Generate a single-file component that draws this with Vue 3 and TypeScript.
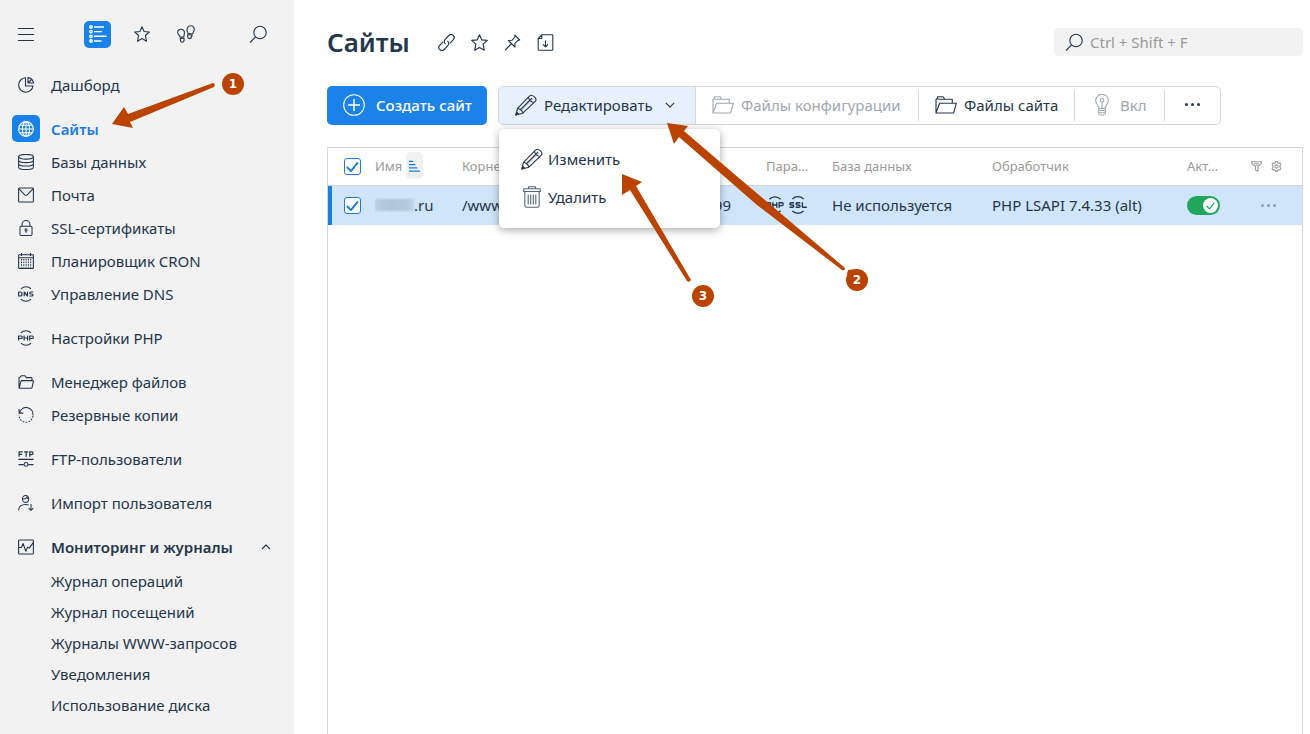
<script setup lang="ts">
import { ref } from 'vue'

interface NavItem {
  label: string
  icon: string
  active?: boolean
}

const groups: NavItem[][] = [
  [{ label: 'Дашборд', icon: 'pie' }],
  [
    { label: 'Сайты', icon: 'globe', active: true },
    { label: 'Базы данных', icon: 'db' },
    { label: 'Почта', icon: 'mail' },
    { label: 'SSL-сертификаты', icon: 'lock' },
    { label: 'Планировщик CRON', icon: 'calendar' },
    { label: 'Управление DNS', icon: 'dns' },
  ],
  [{ label: 'Настройки PHP', icon: 'php' }],
  [
    { label: 'Менеджер файлов', icon: 'folder' },
    { label: 'Резервные копии', icon: 'restore' },
  ],
  [{ label: 'FTP-пользователи', icon: 'ftp' }],
  [{ label: 'Импорт пользователя', icon: 'import' }],
]

const journal: string[] = [
  'Журнал операций',
  'Журнал посещений',
  'Журналы WWW-запросов',
  'Уведомления',
  'Использование диска',
]

const allChecked = ref(true)
const rowChecked = ref(true)
const enabled = ref(true)
const query = ref('')
</script>

<template>
  <svg class="sprite" aria-hidden="true">
    <symbol id="burger" viewBox="0 0 16 16"><path d="M0 2.500h16M0 8.500h16M0 14.500h16" /></symbol>
    <symbol id="list" viewBox="0 0 18 18">
      <g stroke-width="1.400">
        <circle cx="2" cy="2" r="1.200" /><circle cx="2" cy="6.600" r="1.200" /><circle cx="2" cy="11.300" r="1.200" /><circle cx="2" cy="16" r="1.200" />
        <path d="M5 2h10M5 6.600h8M5 11.300h12.500M5 16h7.500" />
      </g>
    </symbol>
    <symbol id="star" viewBox="0 0 16 16"><path d="M8 .7l2.100 4.800 5.200.5-3.900 3.500 1.100 5.700L8 12.600l-4.500 2.600 1.100-5.700L.7 6l5.200-.5z" /></symbol>
    <symbol id="steps" viewBox="0 0 18 18">
      <path d="M.9 8.300C.2 5.800 1.700 4.300 3.900 4.300c2.400 0 3.700 1.600 3.500 3.900-.1 1.500-.5 2-.5 3.500l-3.800.6C2.900 10.500 1.400 10 .9 8.300zM3.200 13.600l3.700-.6c.6 2.200.1 4.200-1.500 4.300-1.500.1-2.200-1.500-2.200-3.700zM10 5.500C9.900 2.700 11.400.8 13.700.8c2.500 0 4 1.900 3.500 4.400-.4 1.800-1.300 2.200-1.600 3.800l-4.700-.8c0-1.200-.8-1.500-.9-2.700zM10.800 9.500l4.300.8c-.5 2.200-1.300 3.600-2.800 3.400-1.500-.2-1.900-1.900-1.500-4.200z" />
    </symbol>
    <symbol id="search" viewBox="0 0 18 18"><circle cx="11" cy="7.500" r="6.200" /><path d="M6.600 11.900L1 17.500" /></symbol>
    <symbol id="pie" viewBox="0 0 16 16"><path d="M7.500.8A7.200 7.200 0 1 0 15 9H7.500zM10 .6V6h5.500A6.500 6.500 0 0 0 10 .6zM10 6l3.500-3.500" /></symbol>
    <symbol id="globe" viewBox="0 0 16 16"><circle cx="8" cy="8" r="7.400" /><ellipse cx="8" cy="8" rx="3.600" ry="7.400" /><path d="M8 .6v14.800M.6 8h14.800M1.700 4.300h12.600M1.700 11.700h12.600" /></symbol>
    <symbol id="db" viewBox="0 0 16 16"><ellipse cx="8" cy="2.800" rx="7.400" ry="2.300" /><path d="M.6 2.800v10.400c0 1.300 3.300 2.300 7.400 2.300s7.400-1 7.400-2.300V2.800M.6 6.300c0 1.300 3.300 2.300 7.400 2.300s7.400-1 7.400-2.300M.6 9.700c0 1.300 3.300 2.300 7.400 2.300s7.400-1 7.400-2.300" /></symbol>
    <symbol id="mail" viewBox="0 0 16 16"><rect x=".6" y="1" width="14.800" height="14" rx=".8" /><path d="M1 1.800l5.800 6q1.200 1 2.400 0l5.800-6" /></symbol>
    <symbol id="lock" viewBox="0 0 16 17"><rect x="1.600" y="6.600" width="12.800" height="9.800" rx="1.200" /><path d="M3.800 6.600V4.800a4.200 4.200 0 0 1 8.400 0v1.800M8 11.600v2" /><circle cx="8" cy="10.500" r="1.100" /></symbol>
    <symbol id="calendar" viewBox="0 0 16 16"><rect x=".6" y="1.800" width="14.800" height="13.600" rx=".6" /><path d="M1 4.700h14M3.500 0v3M12.500 0v3" /><path stroke-width="1" stroke-dasharray="1.600 1" d="M3.500 6v8.500M5.800 6v8.500M8.100 6v8.500M10.400 6v8.500M12.700 6v8.500" /></symbol>
    <symbol id="dns" viewBox="0 0 16 16"><path d="M3 2.900a7 7 0 0 1 10 0M3 13.100a7 7 0 0 0 10 0" /><path stroke-width="1.200" d="M.6 6v4h1.600c2.400 0 2.400-4 0-4zM6.200 10.300V6l3.300 4V5.700M15.200 6h-2.500c-1.200 0-1.200 2 0 2h1.200c1.400 0 1.400 2 0 2h-2.500" /></symbol>
    <symbol id="php" viewBox="0 0 16 16"><path d="M3 2.900a7 7 0 0 1 10 0M3 13.100a7 7 0 0 0 10 0" /><path stroke-width="1.200" d="M.6 10.400V6h2.600c1.500 0 1.500 2.500 0 2.500H.8M6.100 5.600v4.800M9.600 5.600v4.800M6.100 8h3.500M11.700 10.400V6h2.500c1.500 0 1.500 2.500 0 2.500h-2.300" /></symbol>
    <symbol id="ssl" viewBox="0 0 16 16"><path d="M3 2.600a7.300 7.300 0 0 1 10 0M3 13.400a7.300 7.300 0 0 0 10 0" /><path stroke-width="1.200" d="M4.500 6H1.900C.4 6 .4 8 1.900 8h1.200c1.600 0 1.600 2 0 2H.4M10 6H7.400C5.900 6 5.900 8 7.400 8h1.200c1.600 0 1.600 2 0 2H5.900M11.900 5.500V10h4" /></symbol>
    <symbol id="folder" viewBox="0 0 16 14"><path d="M1 12.800V2.800l1.500-.9L3.200.7h3.600l1.600 1.900h4.800q.8 0 .8.800v2.200M1.200 13.200l1.700-6.800q.2-.8 1-.8h10.700q.9 0 .8.800l-1.300 6q-.2.800-1 .8z" /></symbol>
    <symbol id="restore" viewBox="0 0 16 17"><path d="M1.300 5.700A7.200 7.200 0 0 1 15.300 9M.6 2v4.500h4.600" /><path stroke-dasharray="1.800 1.400" d="M15.300 9.500A7.200 7.200 0 0 1 .8 8.500" /></symbol>
    <symbol id="ftp" viewBox="0 0 16 17"><path stroke-width="1.300" d="M.7 6V1h3.800M.7 3.500h3.200M6 1h4.400M8.200 1v5M12 6V1h2.200c1.700 0 1.700 2.800 0 2.800H12" /><path stroke-width="1.300" d="M0 9h16M0 14.500h5.700M10.300 14.500H16" /><circle cx="8" cy="14.300" r="2" /></symbol>
    <symbol id="import" viewBox="0 0 17 17"><ellipse cx="8" cy="4.300" rx="3.300" ry="3.700" /><path d="M4.900 4.200c2.500.2 3.900-.5 4.500-2 .2 1 .8 1.800 1.800 2M.7 16.600c0-4.500 3-6.600 7.300-6.600 1.400 0 2.400.2 3.300.6M13.800 9.500v6.800M11.300 14l2.500 2.400 2.500-2.400" /></symbol>
    <symbol id="monitor" viewBox="0 0 16 16"><rect x=".6" y="1" width="14.800" height="14" rx=".8" /><path d="M.6 8.500h2.800l1.700-4 2.700 7.700 1.800-4.100 1.700 1 3.900-5.500" /></symbol>
    <symbol id="up" viewBox="0 0 10 6"><path d="M1 5l4-4 4 4" /></symbol>
    <symbol id="down" viewBox="0 0 10 6"><path d="M.8.8L5 5.200 9.200.8" /></symbol>
    <symbol id="link" viewBox="0 0 16 16">
      <g transform="translate(8 8) rotate(-47)">
        <path d="M1.800 2.900H6.300a2.900 2.900 0 0 0 0-5.800H.8a2.700 2.700 0 0 0-2.400 3.300" />
        <path d="M-1.800-2.900H-6.300a2.900 2.900 0 0 0 0 5.800H-.8a2.700 2.700 0 0 0 2.400-3.300" />
      </g>
    </symbol>
    <symbol id="pin" viewBox="0 0 16 17"><path d="M10.300 1l4.900 5-1.800.4-3 3 .1 3.600-6.600-6.500 3.500-.2 3-3.300zM6.600 10L.7 16" /></symbol>
    <symbol id="save" viewBox="0 0 16 17"><path d="M4.300.8h10.300q.7 0 .7.700v14q0 .7-.7.700H1.400q-.7 0-.7-.7V4.500zM4.300.8v3.700H.7M8 6.500v6.300M5.500 10.500L8 12.900l2.500-2.400" /></symbol>
    <symbol id="plus" viewBox="0 0 22 22"><circle cx="11" cy="11" r="10.300" /><path stroke-width="1.500" d="M11 5v12M5 11h12" /></symbol>
    <symbol id="pencil" viewBox="0 0 22 22">
      <path fill="#c5cbd3" stroke="none" d="M5 15L16.500 3.200l2.300 1.500L6.500 17z" />
      <path d="M.9 21l1.600-6.700L14.500 2.100c2.300-2.600 8.200 2.200 5.900 5L7.900 19.200zM2.500 14.300c2.200.2 4.900 2.500 5.400 4.900M5 16.200L16.800 4.300M13.500 3.500q.7 3.500 5 5" />
      <path fill="currentColor" d="M.9 21l.7-2.900 2 2z" />
    </symbol>
    <symbol id="folder-big" viewBox="0 0 22 18"><path d="M1 17V3.500l1.500-1.400V.8h5.600l1.700 2.500h7.500v3.900M1 17L4.600 7.200h16.800L18.600 17zM2.500 3.300h7.300" /></symbol>
    <symbol id="trash" viewBox="0 0 18 22"><path d="M5.500 2.800V.8h7v2M.7 5.500V3.700c0-.5.400-.9.900-.9h14.800c.5 0 .9.400.9.900v1.800zM1.800 5.500v14c0 1 .7 1.700 1.700 1.700h11c1 0 1.700-.7 1.700-1.700v-14M5.200 8.500v10M7.700 8.500v10M10.300 8.500v10M12.800 8.500v10" /></symbol>
    <symbol id="bulb" viewBox="0 0 14 22"><path d="M4 14.500c0-3.200-3.300-4.200-3.300-8a6.300 6.300 0 0 1 12.600 0c0 3.800-3.300 4.800-3.300 8zM3.700 16.500h6.600M3.700 18.800h6.600M4.500 21h5M3.700 14.500v6M10.300 14.500v6M7 8.500v6" /><circle cx="7" cy="6.300" r="1.800" /></symbol>
    <symbol id="filter" viewBox="0 0 11 11"><path d="M.6.7h9.800v1.600L7 5.700v4.600L4.500 9V5.700L.6 2.300zM3 2.700h5M4.500 4.300H7" /></symbol>
    <symbol id="gear" viewBox="0 0 11 11"><path d="M4.300 1.800L4.600.6h1.800l.3 1.200 1 .6L9 2l.9 1.600-.9.9v1.900l.9.900L9 9l-1.300-.4-1 .6-.3 1.200H4.600l-.3-1.200-1-.6L2 9l-.9-1.700.9-.9V4.500l-.9-.9L2 2l1.300.4z" /><circle cx="5.500" cy="5.500" r="1.600" /></symbol>
    <symbol id="tick" viewBox="0 0 14 12"><path stroke-width="2" d="M1 6l4.300 4.500L12.800 1" /></symbol>
    <symbol id="sort" viewBox="0 0 12 13"><path stroke-width="1.300" d="M0 1.500h4.500M0 5h7M0 8.500h9M0 12h12" /></symbol>
  </svg>

  <div class="app">
    <aside class="sidebar">
      <div class="modes">
        <button class="plain" aria-label="Меню"><svg class="i16"><use href="#burger" /></svg></button>
        <div class="tabs">
          <button class="plain tile" aria-label="Разделы"><svg class="i18"><use href="#list" /></svg></button>
          <button class="plain" aria-label="Избранное"><svg class="i16"><use href="#star" /></svg></button>
          <button class="plain" aria-label="Недавние"><svg class="i18"><use href="#steps" /></svg></button>
        </div>
        <button class="plain" aria-label="Поиск по меню"><svg class="i18"><use href="#search" /></svg></button>
      </div>
      <nav>
        <ul v-for="(group, g) in groups" :key="g" class="group">
          <li v-for="item in group" :key="item.label">
            <a href="#" class="item" :class="{ active: item.active }">
              <span class="slot"><svg class="i16"><use :href="'#' + item.icon" /></svg></span>
              {{ item.label }}
            </a>
          </li>
        </ul>
        <button class="item section">
          <span class="slot"><svg class="i16"><use href="#monitor" /></svg></span>
          Мониторинг и журналы
          <svg class="chevron"><use href="#up" /></svg>
        </button>
        <ul class="sub">
          <li v-for="entry in journal" :key="entry"><a href="#">{{ entry }}</a></li>
        </ul>
      </nav>
    </aside>

    <main class="main">
      <header class="head">
        <h1>Сайты</h1>
        <div class="tools">
          <button class="plain" aria-label="Ссылка"><svg class="i17"><use href="#link" /></svg></button>
          <button class="plain" aria-label="В избранное"><svg class="i17"><use href="#star" /></svg></button>
          <button class="plain" aria-label="Закрепить"><svg class="i17"><use href="#pin" /></svg></button>
          <button class="plain" aria-label="Выгрузить"><svg class="i17"><use href="#save" /></svg></button>
        </div>
        <label class="search">
          <svg class="i18"><use href="#search" /></svg>
          <input v-model="query" type="text" placeholder="Ctrl + Shift + F" aria-label="Поиск" />
        </label>
      </header>

      <div class="toolbar">
        <button class="create"><svg class="i22"><use href="#plus" /></svg>Создать сайт</button>
        <div class="actions">
          <div class="edit">
            <button class="action open">
              <svg class="i22"><use href="#pencil" /></svg>Редактировать<svg class="caret"><use href="#down" /></svg>
            </button>
            <div class="menu">
              <button><svg class="i22"><use href="#pencil" /></svg>Изменить</button>
              <button><svg class="i22 soft"><use href="#trash" /></svg>Удалить</button>
            </div>
          </div>
          <button class="action config" disabled><svg class="i22"><use href="#folder-big" /></svg>Файлы конфигурации</button>
          <button class="action files"><svg class="i22"><use href="#folder-big" /></svg>Файлы сайта</button>
          <button class="action power" disabled><svg class="i22"><use href="#bulb" /></svg>Вкл</button>
          <button class="action more" aria-label="Ещё"><span class="dots"><i></i><i></i><i></i></span></button>
        </div>
      </div>

      <div class="panel">
        <table>
          <colgroup>
            <col class="c-check" /><col class="c-name" /><col class="c-root" /><col class="c-ip" /><col class="c-params" />
            <col class="c-base" /><col /><col class="c-active" /><col class="c-tools" />
          </colgroup>
          <thead>
            <tr>
              <th class="pick">
                <label class="check"><input v-model="allChecked" type="checkbox" aria-label="Выбрать все" /><svg v-if="allChecked"><use href="#tick" /></svg></label>
              </th>
              <th><span class="sorted">Имя <button class="sort" aria-label="Сортировка"><svg><use href="#sort" /></svg></button></span></th>
              <th>Корне</th>
              <th></th>
              <th>Пара...</th>
              <th>База данных</th>
              <th>Обработчик</th>
              <th>Акт...</th>
              <th class="control">
                <span class="filters">
                  <button class="plain" aria-label="Фильтр"><svg><use href="#filter" /></svg></button>
                  <button class="plain" aria-label="Настройки таблицы"><svg><use href="#gear" /></svg></button>
                </span>
              </th>
            </tr>
          </thead>
          <tbody>
            <tr>
              <td class="pick">
                <label class="check"><input v-model="rowChecked" type="checkbox" aria-label="Выбрать сайт" /><svg v-if="rowChecked"><use href="#tick" /></svg></label>
              </td>
              <td><span class="domain"><span class="masked"></span>.ru</span></td>
              <td>/www</td>
              <td class="ip">99</td>
              <td><span class="params"><svg class="i18"><use href="#php" /></svg><svg class="i18"><use href="#ssl" /></svg></span></td>
              <td>Не используется</td>
              <td>PHP LSAPI 7.4.33 (alt)</td>
              <td class="control">
                <label class="switch">
                  <input v-model="enabled" type="checkbox" aria-label="Активен" />
                  <span class="knob"><svg><use href="#tick" /></svg></span>
                </label>
              </td>
              <td class="control"><button class="plain rowmore" aria-label="Действия"><span class="dots"><i></i><i></i><i></i></span></button></td>
            </tr>
          </tbody>
        </table>
      </div>
    </main>

    <svg class="notes" aria-hidden="true">
      <path d="M112 124L124 107L128 114L213 83Q216 84 214 87L130 122L133 128Z" />
      <path d="M667 123L688 126L684 131L733 173L845 268Q845 271 842 270L757 205L679 137L674 144Z" />
      <path d="M622 174L642 182L636 186L691 280Q689 283 687 281L630 190L622 195Z" />
      <path d="M847 274L848 270L857 269L850 280Z" />
      <circle cx="233" cy="84" r="11" />
      <circle cx="857" cy="280" r="11" />
      <circle cx="703" cy="296" r="11" />
      <text x="233" y="88">1</text>
      <text x="857" y="284">2</text>
      <text x="703" y="300">3</text>
    </svg>
  </div>
</template>

<style>
body {
  margin: 0;
  background: #fff;
}
</style>

<style scoped>
.sprite {
  position: absolute;
  width: 0;
  height: 0;
}
.app {
  position: relative;
  display: flex;
  height: 100vh;
  overflow: hidden;
  font: 15px/20px "Noto Sans", sans-serif;
  color: #24364b;
}
svg {
  display: block;
  flex: none;
  fill: none;
  stroke: currentColor;
  stroke-width: 1.1;
  stroke-linejoin: round;
}
.i16 { width: 16px; height: 16px; }
.i17 { width: 17px; height: 17px; }
.i18 { width: 18px; height: 18px; }
.i22 { width: 22px; height: 22px; }
button {
  font: inherit;
  color: inherit;
  border: 0;
  background: none;
  padding: 0;
  cursor: pointer;
}
ul {
  list-style: none;
  margin: 0;
  padding: 0;
}
a {
  color: inherit;
  text-decoration: none;
}
.plain {
  display: flex;
  align-items: center;
  justify-content: center;
}

.sidebar {
  flex: none;
  width: 294px;
  background: #f2f2f2;
}
.modes {
  display: flex;
  align-items: center;
  height: 68px;
  padding: 0 27px 0 18px;
  box-sizing: border-box;
}
.tabs {
  display: flex;
  align-items: center;
  gap: 27px;
  margin: 0 auto 0 50px;
}
.tabs .tile {
  margin-right: -4px;
}
.tile {
  width: 27px;
  height: 27px;
  border-radius: 5px;
  background: #1a82e8;
  color: #fff;
}
.group {
  margin-bottom: 11px;
}
.item {
  display: flex;
  align-items: center;
  height: 33px;
  padding-left: 12px;
  gap: 11px;
}
.slot {
  display: flex;
  align-items: center;
  justify-content: center;
  width: 28px;
  height: 27px;
  border-radius: 5px;
}
.active {
  color: #1f7bdc;
  font-weight: 600;
}
.active .slot {
  background: #1a82e8;
  color: #fff;
}
.section {
  width: 100%;
  padding-right: 23px;
  font-weight: 600;
}
.chevron {
  width: 10px;
  height: 6px;
  margin-left: auto;
}
.sub {
  padding: 3px 0 0 51px;
}
.sub a {
  display: block;
  line-height: 31px;
}

.main {
  flex: 1;
  min-width: 0;
  display: flex;
  flex-direction: column;
  padding: 0 7px 0 33px;
}
.head {
  display: flex;
  align-items: center;
  height: 84px;
}
h1 {
  margin: 0;
  font-size: 26px;
  line-height: 36px;
  font-weight: 600;
}
.tools {
  display: flex;
  gap: 16px;
  margin-left: 28px;
}
.search {
  display: flex;
  align-items: center;
  gap: 7px;
  width: 249px;
  height: 28px;
  margin-left: auto;
  padding: 0 11px;
  box-sizing: border-box;
  border-radius: 5px;
  background: #f2f2f2;
}
.search input {
  flex: 1;
  min-width: 0;
  padding: 0;
  border: 0;
  outline: 0;
  background: none;
  font: inherit;
  color: inherit;
}
.search input::placeholder {
  color: #999;
  opacity: 1;
}

.toolbar {
  display: flex;
  gap: 11px;
  margin-top: 2px;
}
.create {
  display: flex;
  align-items: center;
  gap: 11px;
  min-width: 160px;
  height: 39px;
  padding: 0 0 2px 16px;
  box-sizing: border-box;
  border-radius: 5px;
  background: #1a82e8;
  color: #fff;
  font-weight: 500;
}
.actions {
  display: flex;
  align-items: center;
  height: 39px;
  box-sizing: border-box;
  border: 1px solid #d5d7da;
  border-radius: 5px;
}
.edit {
  position: relative;
}
.action {
  display: flex;
  align-items: center;
  gap: 7px;
  height: 31px;
  padding: 0 0 2px 16px;
  box-sizing: border-box;
  border-right: 1px solid #d5d7da;
  white-space: nowrap;
}
.action:disabled {
  color: #a0a8b0;
}
.open {
  width: 197px;
  height: 37px;
  border-radius: 4px 0 0 4px;
  background: #e7f1fc;
}
.caret {
  width: 10px;
  height: 6px;
  margin-left: 5px;
}
.config { width: 223px; }
.files { width: 156px; }
.power { width: 90px; }
.more {
  width: 55px;
  padding: 0 0 2px;
  justify-content: center;
  border: 0;
}
.dots {
  display: flex;
  gap: 3px;
}
.dots i {
  width: 3px;
  height: 3px;
  border-radius: 50%;
  background: currentColor;
}
.menu {
  position: absolute;
  z-index: 2;
  top: 42px;
  left: 0;
  width: 221px;
  padding: 11px 0 12px;
  box-sizing: border-box;
  border-radius: 5px;
  background: #fff;
  box-shadow: 0 2px 9px rgba(0, 0, 0, 0.35);
}
.menu button {
  display: flex;
  align-items: center;
  gap: 5px;
  width: 100%;
  height: 38px;
  padding-left: 22px;
}
.soft {
  color: #56657a;
}

.panel {
  flex: 1;
  margin-top: 22px;
  border: 1px solid #d5d7da;
  border-bottom: 0;
}
table {
  width: 100%;
  table-layout: fixed;
  border-collapse: separate;
  border-spacing: 0;
}
.c-check { width: 47px; }
.c-name { width: 87px; }
.c-root { width: 178px; }
.c-ip { width: 126px; }
.c-params { width: 66px; }
.c-base { width: 160px; }
.c-active { width: 64px; }
.c-tools { width: 51px; }
th,
td {
  padding: 0 0 2px;
  box-sizing: border-box;
  text-align: left;
  white-space: nowrap;
  overflow: hidden;
}
th {
  height: 38px;
  border-bottom: 1px solid #d5d7da;
  font-size: 13px;
  font-weight: 400;
  color: #999;
}
td {
  height: 39px;
  background: #d1e5fa;
}
.pick {
  padding: 0 0 0 16px;
}
.control {
  padding: 0;
}
td.pick {
  box-shadow: inset 4px 0 #1a7ee0;
}
td.ip {
  text-align: right;
  padding-right: 35px;
}
.check {
  display: grid;
  width: 17px;
  height: 17px;
}
.check input {
  grid-area: 1 / 1;
  appearance: none;
  width: 17px;
  height: 17px;
  margin: 0;
  box-sizing: border-box;
  border: 1px solid #1a7ee0;
  border-radius: 3px;
  background: #fff;
}
.check svg {
  grid-area: 1 / 1;
  place-self: center;
  width: 13px;
  height: 12px;
  color: #1a7ee0;
  pointer-events: none;
}
.sorted {
  display: flex;
  align-items: center;
  gap: 4px;
}
.sort {
  display: grid;
  place-items: center;
  width: 17px;
  height: 27px;
  border-radius: 5px;
  background: #f0f0f0;
  color: #1a7ee0;
}
.sort svg {
  width: 11px;
  height: 12px;
}
.filters {
  display: flex;
  gap: 9px;
}
.filters svg {
  width: 11px;
  height: 11px;
}
.domain {
  display: flex;
  align-items: center;
}
.masked {
  width: 39px;
  height: 12px;
  background: linear-gradient(90deg, #bccfe2, #b0c4d7 40%, #b3c7da 80%, #c0d4e8);
  filter: blur(1px);
}
.params {
  display: flex;
  gap: 5px;
}
.switch {
  display: flex;
  align-items: center;
  justify-content: flex-end;
  width: 33px;
  height: 19px;
  padding-right: 2px;
  box-sizing: border-box;
  border-radius: 10px;
  background: #21a75c;
}
.switch input {
  appearance: none;
  width: 0;
  height: 0;
  margin: 0;
}
.knob {
  display: grid;
  place-items: center;
  width: 15px;
  height: 15px;
  border-radius: 50%;
  background: #fff;
  color: #21a75c;
}
.knob svg {
  width: 9px;
  height: 8px;
}
.rowmore {
  padding-left: 10px;
  color: #929ba6;
}
.notes {
  position: absolute;
  z-index: 3;
  top: 0;
  left: 0;
  width: 100%;
  height: 100%;
  pointer-events: none;
  fill: #ba4300;
  stroke: none;
}
.notes text {
  fill: #fff;
  font: 700 12px "DejaVu Sans", sans-serif;
  text-anchor: middle;
}
</style>
